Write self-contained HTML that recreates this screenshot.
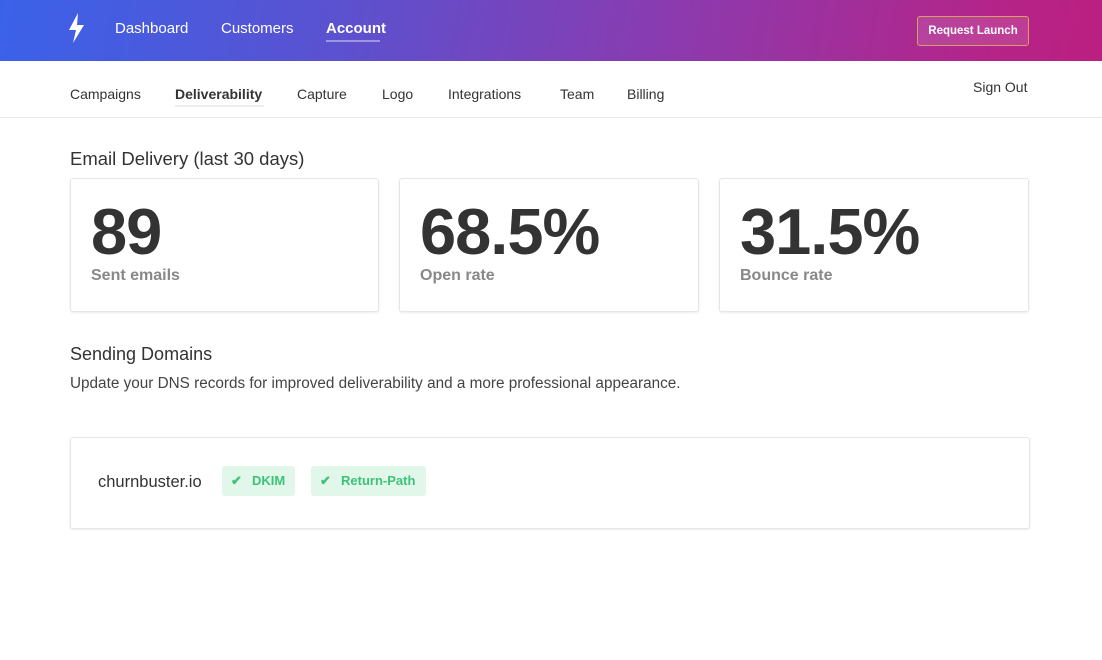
<!DOCTYPE html>
<html><head><meta charset="utf-8"><style>
*{box-sizing:border-box;margin:0;padding:0}
body{width:1102px;height:660px;background:#fff;font-family:"Liberation Sans",sans-serif;color:#333;position:relative;overflow:hidden}
.hdr{position:absolute;left:0;top:0;width:1102px;height:61px;background:linear-gradient(100deg,#3a62e9 0%,#5a52d0 30%,#8a3bb0 60%,#b52488 90%,#bb1f80 100%)}
.hdr a{position:absolute;top:20px;color:#fff;font-size:15px;text-decoration:none}
.btn{position:absolute;left:917px;top:16px;width:112px;height:30px;border:1px solid #d8a060;border-radius:3px;background:rgba(255,255,255,.12);color:#fff;font-size:11.5px;font-weight:bold;text-align:center;line-height:28px}
.sub{position:absolute;left:0;top:61px;width:1102px;height:57px;border-bottom:1px solid #e8e8e8}
.sub span{position:absolute;top:25px;font-size:14px;color:#333}
.card{position:absolute;border:1px solid #e6e6e6;border-radius:3px;box-shadow:0 1px 2px rgba(0,0,0,.08);background:#fff}
.num{position:absolute;left:20px;top:15px;font-size:65px;font-weight:bold;color:#333;letter-spacing:-1px}
.lbl{position:absolute;left:20px;top:88px;font-size:16px;font-weight:bold;color:#888}
h2{position:absolute;font-weight:normal;color:#333}
.badge{position:absolute;top:28px;height:30px;background:#e0f7ea;border-radius:3px;color:#3ec27a;font-size:13px;font-weight:bold;line-height:30px}
</style></head><body>
<div class="hdr">
<svg style="position:absolute;left:68px;top:13px" width="18" height="30" viewBox="0 0 18 30"><path d="M10 0 L1 17 L8 17 L5 30 L16 12 L9 12 Z" fill="#fff"/></svg>
<a style="left:115px">Dashboard</a>
<a style="left:221px">Customers</a>
<a style="left:326px;font-weight:bold">Account</a>
<div style="position:absolute;left:326px;top:40px;width:54px;height:2px;background:rgba(255,255,255,.4)"></div>
<div class="btn">Request Launch</div>
</div>
<div class="sub">
<span style="left:70px">Campaigns</span>
<span style="left:175px;font-weight:bold">Deliverability</span>
<div style="position:absolute;left:175px;top:44px;width:89px;height:2px;background:#eee"></div>
<span style="left:297px">Capture</span>
<span style="left:382px">Logo</span>
<span style="left:448px">Integrations</span>
<span style="left:560px">Team</span>
<span style="left:627px">Billing</span>
<span style="left:973px;top:18px">Sign Out</span>
</div>
<h2 style="left:70px;top:148px;font-size:18.5px">Email Delivery (last 30 days)</h2>
<div class="card" style="left:70px;top:178px;width:309px;height:134px"><div class="num">89</div><div class="lbl">Sent emails</div></div>
<div class="card" style="left:399px;top:178px;width:300px;height:134px"><div class="num">68.5%</div><div class="lbl">Open rate</div></div>
<div class="card" style="left:719px;top:178px;width:310px;height:134px"><div class="num">31.5%</div><div class="lbl">Bounce rate</div></div>
<h2 style="left:70px;top:344px;font-size:18px">Sending Domains</h2>
<div style="position:absolute;left:70px;top:375px;font-size:15.3px;color:#444">Update your DNS records for improved deliverability and a more professional appearance.</div>
<div class="card" style="left:70px;top:437px;width:960px;height:92px">
<div style="position:absolute;left:27px;top:35px;font-size:16.5px;color:#333">churnbuster.io</div>
<div class="badge" style="left:151px;width:73px"><span style="position:absolute;left:9px">✔</span><span style="position:absolute;left:30px">DKIM</span></div>
<div class="badge" style="left:240px;width:115px"><span style="position:absolute;left:9px">✔</span><span style="position:absolute;left:30px">Return-Path</span></div>
</div>
</body></html>
